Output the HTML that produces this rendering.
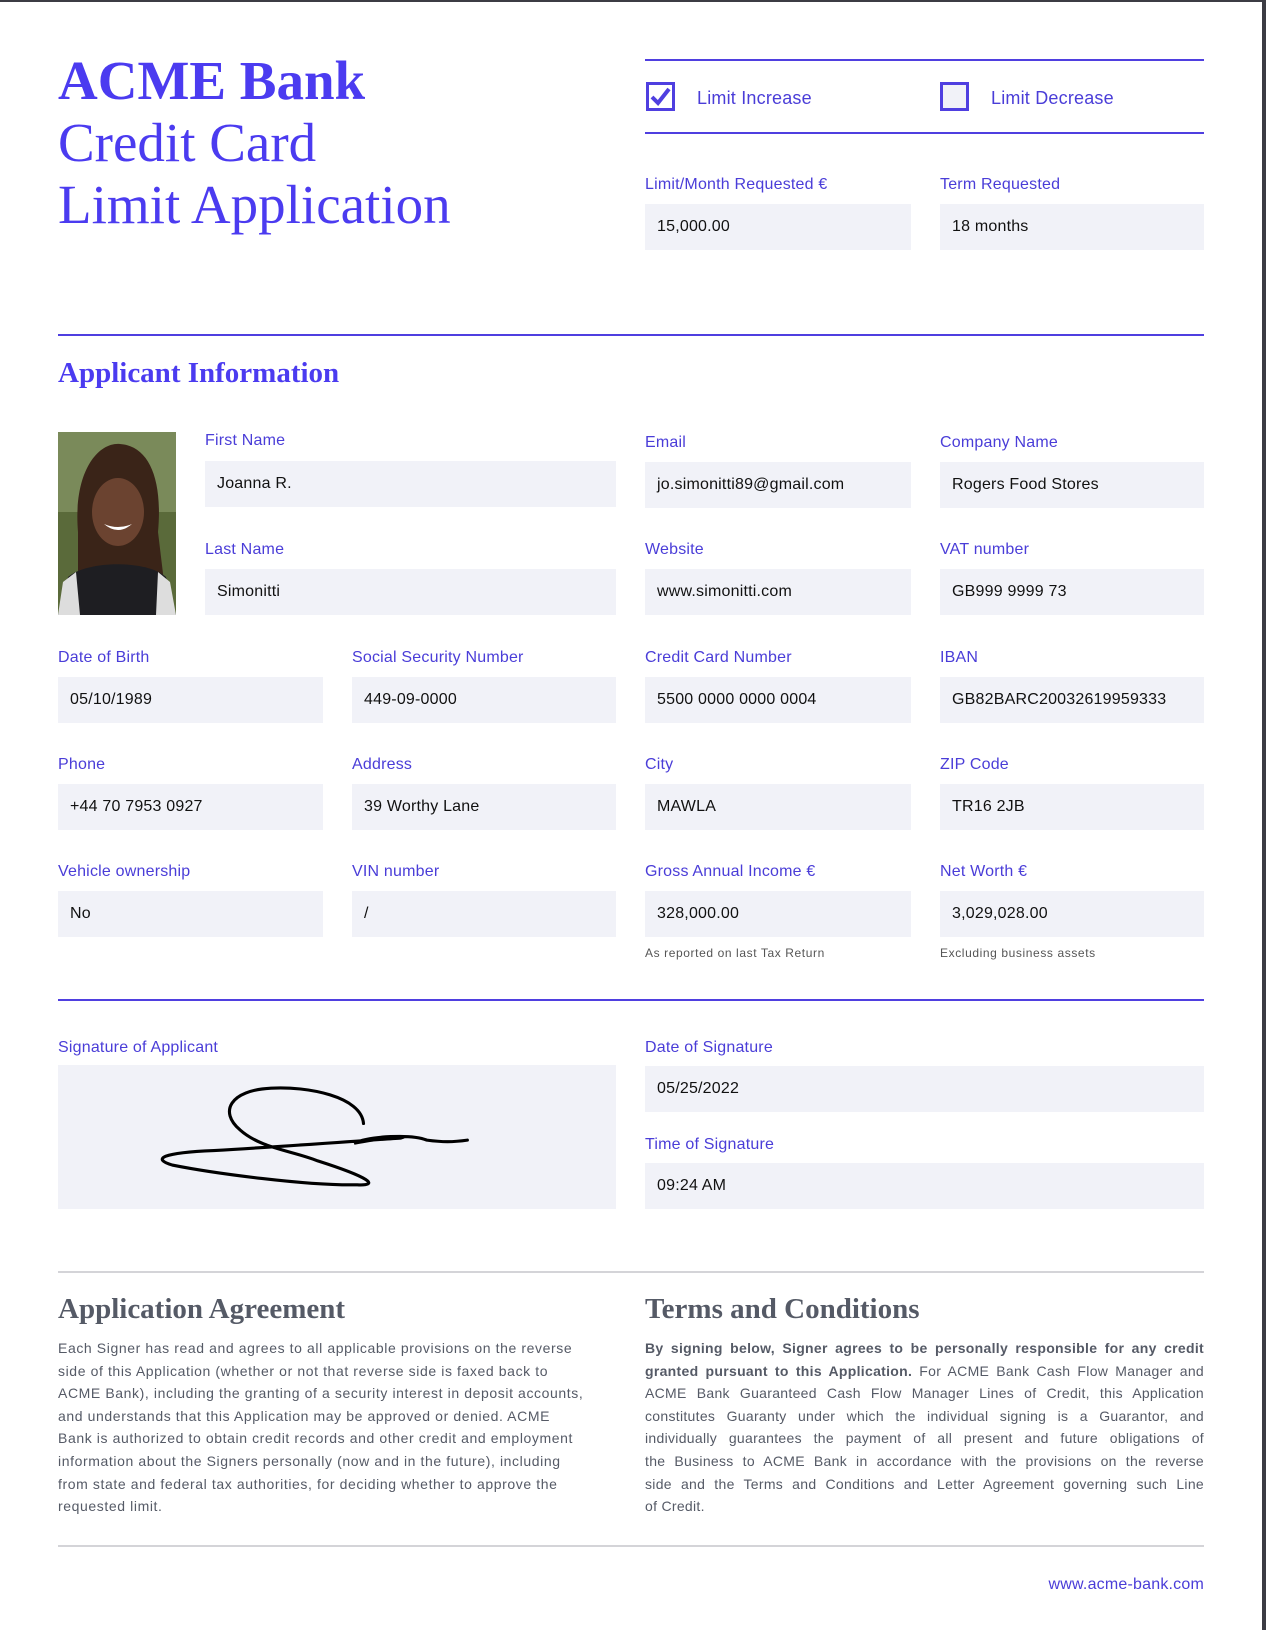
<!DOCTYPE html>
<html><head><meta charset="utf-8"><style>
*{margin:0;padding:0;box-sizing:border-box}
body{width:1266px;height:1630px;background:#fff;position:relative;overflow:hidden;font-family:"Liberation Sans",sans-serif}
.a{position:absolute}
.edge-t{left:0;top:0;width:1266px;height:2px;background:#3c3c44}
.edge-r{left:1262px;top:0;width:4px;height:1630px;background:#3c3c44}
.serif{font-family:"Liberation Serif",serif;color:#4b3bf0}
.line{height:2px;background:#4f3fe0}
.gline{height:2px;background:#d4d4d8}
.lbl{font-size:16px;color:#4a3dd8;white-space:nowrap;line-height:20px;letter-spacing:.2px}
.fld{background:#f1f2f8;height:46px;font-size:16px;color:#111;padding-left:12px;line-height:46px;white-space:nowrap;letter-spacing:.2px}
.hint{font-size:12px;color:#555;letter-spacing:.6px}
.body{font-size:14px;color:#555a66;line-height:22.6px;letter-spacing:.6px;white-space:nowrap}
.j div{text-align:justify;text-align-last:justify;letter-spacing:.3px}
.j div.last{text-align-last:left}
.cb{width:29px;height:29px;border:3px solid #4f3fe0;background:#f1f2f8}
</style></head><body>
<div class="a edge-t"></div><div class="a edge-r"></div>

<div class="a serif" style="left:58px;top:50px;font-size:55px;line-height:62px;">
<div style="font-weight:bold">ACME Bank</div>
<div>Credit Card</div>
<div>Limit Application</div>
</div>

<div class="a line" style="left:645px;top:59px;width:559px"></div>
<div class="a line" style="left:645px;top:132px;width:559px"></div>
<div class="a cb" style="left:646px;top:82px;background:#fff">
<svg width="23" height="23" viewBox="0 0 23 23" style="position:absolute;left:0;top:0"><path d="M3 12 L9 18 L20 4" stroke="#4f3fe0" stroke-width="4" fill="none"/></svg></div>
<div class="a lbl" style="left:697px;top:88px;font-size:18px">Limit Increase</div>
<div class="a cb" style="left:940px;top:82px"></div>
<div class="a lbl" style="left:991px;top:88px;font-size:18px">Limit Decrease</div>

<div class="a lbl" style="left:645px;top:175px">Limit/Month Requested €</div>
<div class="a fld" style="left:645px;top:204px;width:266px">15,000.00</div>
<div class="a lbl" style="left:940px;top:175px">Term Requested</div>
<div class="a fld" style="left:940px;top:204px;width:264px">18 months</div>

<div class="a line" style="left:58px;top:334px;width:1146px"></div>
<div class="a serif" style="left:58px;top:355px;font-size:29px;font-weight:bold;line-height:36px">Applicant Information</div>

<svg class="a" style="left:58px;top:432px" width="118" height="183" viewBox="0 0 118 183">
<rect width="118" height="183" fill="#5a6a3a"/>
<rect width="118" height="80" fill="#7a8a5a"/>
<path d="M20 183 L20 100 C15 40 40 10 62 12 C90 14 105 45 100 100 L110 183Z" fill="#3a2418"/>
<ellipse cx="60" cy="80" rx="26" ry="34" fill="#6b4330"/>
<path d="M0 183 L10 145 C30 128 90 128 108 145 L118 183Z" fill="#1e1e22"/>
<path d="M0 183 L5 150 L18 140 L22 183Z M100 140 L112 150 L118 183 L98 183Z" fill="#ddd"/>
<path d="M46 92 Q60 104 74 92 Q60 98 46 92Z" fill="#fff"/>
</svg>

<div class="a lbl" style="left:205px;top:431px">First Name</div>
<div class="a fld" style="left:205px;top:461px;width:411px">Joanna R.</div>
<div class="a lbl" style="left:205px;top:540px">Last Name</div>
<div class="a fld" style="left:205px;top:569px;width:411px">Simonitti</div>

<div class="a lbl" style="left:645px;top:433px">Email</div>
<div class="a fld" style="left:645px;top:462px;width:266px">jo.simonitti89@gmail.com</div>
<div class="a lbl" style="left:940px;top:433px">Company Name</div>
<div class="a fld" style="left:940px;top:462px;width:264px">Rogers Food Stores</div>
<div class="a lbl" style="left:645px;top:540px">Website</div>
<div class="a fld" style="left:645px;top:569px;width:266px">www.simonitti.com</div>
<div class="a lbl" style="left:940px;top:540px">VAT number</div>
<div class="a fld" style="left:940px;top:569px;width:264px">GB999 9999 73</div>

<div class="a lbl" style="left:58px;top:648px">Date of Birth</div>
<div class="a fld" style="left:58px;top:677px;width:265px">05/10/1989</div>
<div class="a lbl" style="left:352px;top:648px">Social Security Number</div>
<div class="a fld" style="left:352px;top:677px;width:264px">449-09-0000</div>
<div class="a lbl" style="left:645px;top:648px">Credit Card Number</div>
<div class="a fld" style="left:645px;top:677px;width:266px">5500 0000 0000 0004</div>
<div class="a lbl" style="left:940px;top:648px">IBAN</div>
<div class="a fld" style="left:940px;top:677px;width:264px">GB82BARC20032619959333</div>

<div class="a lbl" style="left:58px;top:755px">Phone</div>
<div class="a fld" style="left:58px;top:784px;width:265px">+44 70 7953 0927</div>
<div class="a lbl" style="left:352px;top:755px">Address</div>
<div class="a fld" style="left:352px;top:784px;width:264px">39 Worthy Lane</div>
<div class="a lbl" style="left:645px;top:755px">City</div>
<div class="a fld" style="left:645px;top:784px;width:266px">MAWLA</div>
<div class="a lbl" style="left:940px;top:755px">ZIP Code</div>
<div class="a fld" style="left:940px;top:784px;width:264px">TR16 2JB</div>

<div class="a lbl" style="left:58px;top:862px">Vehicle ownership</div>
<div class="a fld" style="left:58px;top:891px;width:265px">No</div>
<div class="a lbl" style="left:352px;top:862px">VIN number</div>
<div class="a fld" style="left:352px;top:891px;width:264px">/</div>
<div class="a lbl" style="left:645px;top:862px">Gross Annual Income €</div>
<div class="a fld" style="left:645px;top:891px;width:266px">328,000.00</div>
<div class="a lbl" style="left:940px;top:862px">Net Worth €</div>
<div class="a fld" style="left:940px;top:891px;width:264px">3,029,028.00</div>
<div class="a hint" style="left:645px;top:946px">As reported on last Tax Return</div>
<div class="a hint" style="left:940px;top:946px">Excluding business assets</div>

<div class="a line" style="left:58px;top:999px;width:1146px"></div>

<div class="a lbl" style="left:58px;top:1038px">Signature of Applicant</div>
<div class="a" style="left:58px;top:1065px;width:558px;height:144px;background:#f1f2f8">
<svg width="558" height="144" viewBox="0 0 537 138">
<path d="M294 56 C292 30 240 20 205 22 C165 24 155 45 175 62 C195 80 225 82 250 92 C300 108 310 116 288 115 C240 116 150 104 110 96 C90 90 100 84 150 82 C220 78 300 72 330 70 C345 66 300 72 285 75 C300 68 340 66 355 72 C370 74 380 74 394 72" stroke="#000" stroke-width="3" fill="none" stroke-linecap="round"/>
</svg></div>

<div class="a lbl" style="left:645px;top:1038px">Date of Signature</div>
<div class="a fld" style="left:645px;top:1066px;width:559px">05/25/2022</div>
<div class="a lbl" style="left:645px;top:1135px">Time of Signature</div>
<div class="a fld" style="left:645px;top:1163px;width:559px">09:24 AM</div>

<div class="a gline" style="left:58px;top:1271px;width:1146px"></div>
<div class="a" style="left:58px;top:1291px;font-family:'Liberation Serif',serif;font-size:29px;color:#555a66;font-weight:bold;line-height:36px">Application Agreement</div>
<div class="a" style="left:645px;top:1291px;font-family:'Liberation Serif',serif;font-size:29px;color:#555a66;font-weight:bold;line-height:36px">Terms and Conditions</div>

<div class="a body" style="left:58px;top:1337px;width:560px">
<div>Each Signer has read and agrees to all applicable provisions on the reverse</div>
<div>side of this Application (whether or not that reverse side is faxed back to</div>
<div>ACME Bank), including the granting of a security interest in deposit accounts,</div>
<div>and understands that this Application may be approved or denied. ACME</div>
<div>Bank is authorized to obtain credit records and other credit and employment</div>
<div>information about the Signers personally (now and in the future), including</div>
<div>from state and federal tax authorities, for deciding whether to approve the</div>
<div>requested limit.</div>
</div>
<div class="a body j" style="left:645px;top:1337px;width:559px">
<div><b>By signing below, Signer agrees to be personally responsible for any credit</b></div>
<div><b>granted pursuant to this Application.</b> For ACME Bank Cash Flow Manager and</div>
<div>ACME Bank Guaranteed Cash Flow Manager Lines of Credit, this Application</div>
<div>constitutes Guaranty under which the individual signing is a Guarantor, and</div>
<div>individually guarantees the payment of all present and future obligations of</div>
<div>the Business to ACME Bank in accordance with the provisions on the reverse</div>
<div>side and the Terms and Conditions and Letter Agreement governing such Line</div>
<div class="last">of Credit.</div>
</div>

<div class="a gline" style="left:58px;top:1545px;width:1146px"></div>
<div class="a" style="right:62px;top:1576px;font-size:16px;color:#4a3dd8;letter-spacing:.2px">www.acme-bank.com</div>
</body></html>
